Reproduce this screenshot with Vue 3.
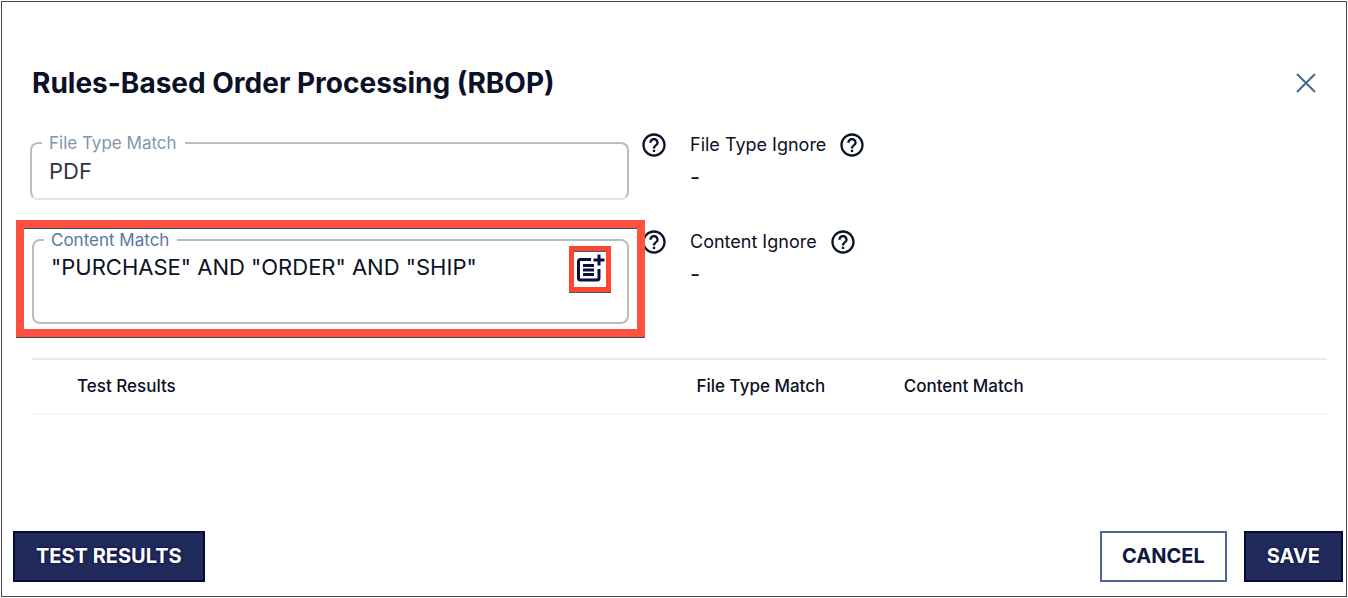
<script setup>
import { ref } from 'vue'

const fileType = ref('PDF')
const content = ref('"PURCHASE" AND "ORDER" AND "SHIP"')
const columns = ['Test Results', 'File Type Match', 'Content Match']
const ignored = [
  { label: 'File Type Ignore', value: '-' },
  { label: 'Content Ignore', value: '-' },
]
</script>

<template>
  <main class="page">
    <section class="dialog" aria-labelledby="dialog-title">
      <header class="head">
        <h1 id="dialog-title">Rules-Based Order Processing (RBOP)</h1>
        <button class="icon-button close" type="button" aria-label="Close">
          <svg viewBox="0 0 20 20" width="20" height="20">
            <path d="M1 1L19 19M19 1L1 19" fill="none" stroke="#416a94" stroke-width="2" />
          </svg>
        </button>
      </header>

      <div class="rules">
        <div class="rule">
          <fieldset class="field">
            <legend><label for="file-type">File Type Match</label></legend>
            <input id="file-type" v-model="fileType" type="text" />
          </fieldset>
          <button class="icon-button help" type="button" aria-label="About File Type Match">
            <svg viewBox="0 0 24 24" width="28" height="28">
              <path fill="#0b1126" d="M11 18h2v-2h-2v2zm1-16C6.480 2 2 6.480 2 12s4.480 10 10 10 10-4.480 10-10S17.520 2 12 2zm0 18c-4.410 0-8-3.590-8-8s3.590-8 8-8 8 3.590 8 8-3.590 8-8 8zm0-14c-2.210 0-4 1.790-4 4h2c0-1.100.9-2 2-2s2 .9 2 2c0 2-3 1.750-3 5h2c0-2.250 3-2.500 3-5 0-2.210-1.790-4-4-4z" />
            </svg>
          </button>
        </div>

        <div class="ignore">
          <div class="ignore-head">
            <span>{{ ignored[0].label }}</span>
            <button class="icon-button" type="button" aria-label="About File Type Ignore">
              <svg viewBox="0 0 24 24" width="28" height="28">
                <path fill="#0b1126" d="M11 18h2v-2h-2v2zm1-16C6.480 2 2 6.480 2 12s4.480 10 10 10 10-4.480 10-10S17.520 2 12 2zm0 18c-4.410 0-8-3.590-8-8s3.590-8 8-8 8 3.590 8 8-3.590 8-8 8zm0-14c-2.210 0-4 1.790-4 4h2c0-1.100.9-2 2-2s2 .9 2 2c0 2-3 1.750-3 5h2c0-2.250 3-2.500 3-5 0-2.210-1.790-4-4-4z" />
              </svg>
            </button>
          </div>
          <p>{{ ignored[0].value }}</p>
        </div>

        <div class="rule marked">
          <fieldset class="field">
            <legend><label for="content">Content Match</label></legend>
            <textarea id="content" v-model="content" rows="2"></textarea>
            <button class="icon-button add" type="button" aria-label="Add content rule">
              <svg viewBox="0 0 32 32" width="32" height="32">
                <g fill="none" stroke="#0a0e3c">
                  <path d="M17 6.500H6.500Q4.500 6.500 4.500 8.500V25Q4.500 27 6.500 27H23Q25 27 25 25V16" stroke-width="3" />
                  <path d="M9 12.500H20M9 17H20M9 21.500H20" stroke-width="3" />
                  <path d="M25 1.500V12.500M19.500 7H30.500" stroke-width="3" />
                </g>
              </svg>
            </button>
          </fieldset>
          <button class="icon-button help" type="button" aria-label="About Content Match">
            <svg viewBox="0 0 24 24" width="28" height="28">
              <path fill="#0b1126" d="M11 18h2v-2h-2v2zm1-16C6.480 2 2 6.480 2 12s4.480 10 10 10 10-4.480 10-10S17.520 2 12 2zm0 18c-4.410 0-8-3.590-8-8s3.590-8 8-8 8 3.590 8 8-3.590 8-8 8zm0-14c-2.210 0-4 1.790-4 4h2c0-1.100.9-2 2-2s2 .9 2 2c0 2-3 1.750-3 5h2c0-2.250 3-2.500 3-5 0-2.210-1.790-4-4-4z" />
            </svg>
          </button>
          <span class="marker" aria-hidden="true"></span>
        </div>

        <div class="ignore">
          <div class="ignore-head">
            <span>{{ ignored[1].label }}</span>
            <button class="icon-button" type="button" aria-label="About Content Ignore">
              <svg viewBox="0 0 24 24" width="28" height="28">
                <path fill="#0b1126" d="M11 18h2v-2h-2v2zm1-16C6.480 2 2 6.480 2 12s4.480 10 10 10 10-4.480 10-10S17.520 2 12 2zm0 18c-4.410 0-8-3.590-8-8s3.590-8 8-8 8 3.590 8 8-3.590 8-8 8zm0-14c-2.210 0-4 1.790-4 4h2c0-1.100.9-2 2-2s2 .9 2 2c0 2-3 1.750-3 5h2c0-2.250 3-2.500 3-5 0-2.210-1.790-4-4-4z" />
              </svg>
            </button>
          </div>
          <p>{{ ignored[1].value }}</p>
        </div>
      </div>

      <div class="results">
        <table>
          <thead>
            <tr>
              <th v-for="column in columns" :key="column" scope="col">{{ column }}</th>
            </tr>
          </thead>
        </table>
      </div>

      <footer class="actions">
        <button class="action solid" type="button">TEST RESULTS</button>
        <button class="action outline" type="button">CANCEL</button>
        <button class="action solid" type="submit">SAVE</button>
      </footer>
    </section>
  </main>
</template>

<style>
body {
  background: #fff;
}
</style>

<style scoped>
* {
  box-sizing: border-box;
}

.page {
  display: flex;
  min-height: 100vh;
  padding: 1px;
  color: #0b1126;
  font-family: Inter, Roboto, "Liberation Sans", sans-serif;
}

.dialog {
  display: flex;
  flex: 1;
  flex-direction: column;
  min-width: 0;
  border: 1px solid #454545;
  background: #fff;
}

.head {
  display: flex;
  align-items: center;
  justify-content: space-between;
  padding: 61px 30px 0 30px;
}

h1 {
  margin: 0;
  font-size: 28px;
  font-weight: 700;
  line-height: 40px;
}

.icon-button {
  display: flex;
  align-items: center;
  justify-content: center;
  flex: none;
  padding: 0;
  border: 0;
  background: none;
}

.rules {
  display: grid;
  grid-template-columns: 1fr 1fr;
  column-gap: 22px;
  row-gap: 32px;
  padding: 32px 18px 0 28px;
}

.rule {
  position: relative;
  display: flex;
  align-items: flex-start;
  gap: 11px;
}

.help {
  margin-top: -4px;
}

.field {
  position: relative;
  flex: 1;
  min-width: 0;
  margin: 0;
  padding: 0 10px;
  border: 2px solid #bcbcbc;
  border-bottom-color: #e4e4e4;
  border-radius: 8px;
}

legend {
  padding: 0 8px 0 7px;
  color: #8295b2;
  font-size: 17px;
  line-height: 16px;
}

legend label {
  display: block;
}

input,
textarea {
  display: block;
  width: 100%;
  padding: 0 7px;
  border: 0;
  outline: 0;
  background: none;
  color: #0b1126;
  font-family: inherit;
  font-size: 22px;
  line-height: 28px;
  resize: none;
}

input {
  height: 47px;
  padding-bottom: 7px;
  color: #303648;
}

textarea {
  height: 74px;
  padding-top: 5px;
  padding-right: 68px;
  overflow: hidden;
}

.marked .field {
  margin-left: 2px;
  border-bottom-color: #bcbcbc;
}

.marked legend {
  color: #58779f;
}

.add {
  position: absolute;
  top: -2px;
  right: 16px;
  width: 42px;
  height: 46px;
  border: 5px solid #ff4433;
  box-shadow: 0 1px #45605f, inset 0 1px #45605f;
}

.marker {
  position: absolute;
  inset: -12px 23px -13px -14px;
  border: 8px solid #ff5140;
  box-shadow: 0 1px #2e5558, inset 0 1px #2e5558;
  pointer-events: none;
}

.ignore-head {
  display: flex;
  align-items: center;
  gap: 12px;
  height: 20px;
  font-size: 18px;
  line-height: 20px;
}

.ignore p {
  margin: 10px 0 0;
  font-size: 22px;
  line-height: 24px;
}

.results {
  padding: 34px 19px 0 30px;
}

table {
  width: 100%;
  border-collapse: collapse;
  table-layout: fixed;
}

th {
  height: 55px;
  padding: 0 17px 2px;
  border-top: 2px solid #e2ebfb;
  border-bottom: 2px solid #f6f7fd;
  font-size: 17px;
  font-weight: 500;
  text-align: left;
}

th:first-child {
  width: 50%;
  padding-left: 45px;
}

th:nth-child(2) {
  width: 16%;
}

.actions {
  display: flex;
  gap: 17px;
  margin-top: auto;
  padding: 24px 3px 14px 11px;
}

.action {
  height: 51px;
  padding: 0 20px 2px;
  border: 2px solid #050a3c;
  font-family: inherit;
  font-size: 20px;
  font-weight: 700;
}

.solid {
  padding: 0 21px 2px;
  background: #202b5c;
  color: #fff;
  text-shadow: 0 0 3px #00003c;
}

.outline {
  margin-left: auto;
  border-color: #53659a;
  background: #fff;
  color: #10183f;
}
</style>
